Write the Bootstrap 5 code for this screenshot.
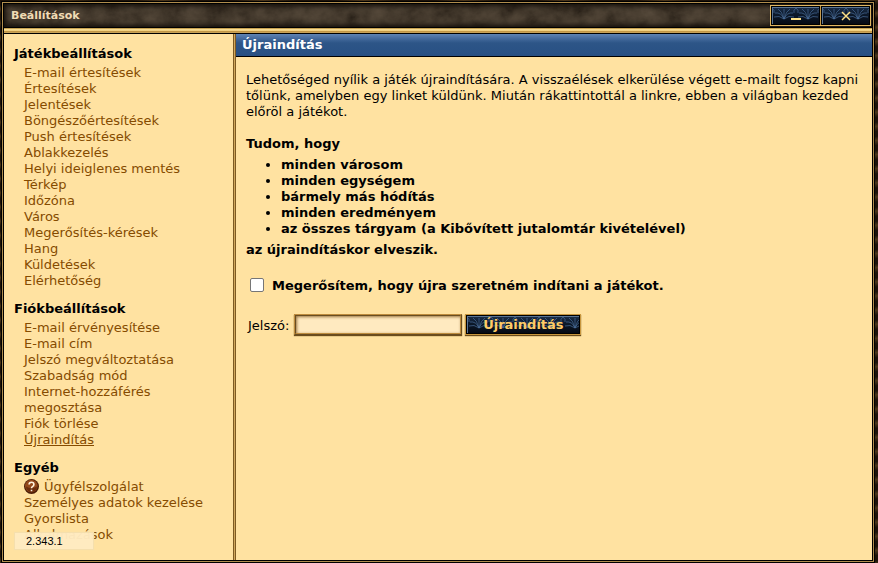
<!DOCTYPE html>
<html lang="hu">
<head>
<meta charset="utf-8">
<meta name="viewport" content="width=device-width, initial-scale=1">
<title>Beállítások</title>
<link rel="stylesheet" href="https://cdn.jsdelivr.net/npm/bootstrap@5.3.0/dist/css/bootstrap.min.css">
<style>
body{font-family:"DejaVu Sans",sans-serif;font-size:13px;line-height:16px;color:#000;background:#30200d}
.frame{padding:2px 4px 1px 2px;background:repeating-linear-gradient(172deg,#1c1208 0 5px,#4a3519 9px,#1c1208 14px)}
.gold-edge{border:1px solid #b08d4d;outline:1px solid #000;background:#000;padding:1px}
.titlebar{height:23px;background:#2b231b}
.titlebar::after{content:"";position:absolute;inset:0;box-shadow:inset 0 0 5px 2px #120d08;pointer-events:none}
.grain{inset:0}
.titlebar h1{font-size:11px;line-height:16px;color:#f0dbb4;padding:0 0 0 7px}
.win-btns{gap:1px;background:#c79c4d;border:1px solid #e0b661;right:1px;top:1px;z-index:1}
.win-btn{width:49px;height:19px;border:1px solid #000;padding:0;background:#07101d;overflow:hidden}
.win-btn svg{display:block;width:100%;height:100%}
.strip{height:7px;background:linear-gradient(#a77a24,#f9df96 25%,#f0ce7c 55%,#a27021 80%,#efd58d);border-top:1px solid #000;border-bottom:1px solid #000}
.pane{background:#ffe2a1}
.side{width:229px;padding:12px 10px 0}
.side h2{font-size:13px;line-height:16px;font-weight:700;margin:0 0 3px}
.side ul{padding-left:10px;margin-bottom:12px}
.side a{color:#854b00;text-decoration:none}
.side a:hover,.side a.current{text-decoration:underline}
.side svg{width:16px;height:16px;margin-right:4px;vertical-align:top}
.divider{width:3px;border:1px solid #7d5a22;border-width:0 1px;background:#d0a75c}
.main-head{height:23px;padding:3px 6px;font-size:13px;line-height:16px;color:#fff;background:linear-gradient(#5f83b3 0,#416799 5px,#2d5587 9px,#285083);border-bottom:1px solid #000}
.content{padding:15px 9px 0 10px}
.facts{padding-left:35px;margin:5px 0}
.confirm{margin-top:18px;gap:8px;padding-left:4px}
.confirm .form-check-input{width:14px;height:14px;margin:0;border:1px solid #767676;border-radius:2px;background-color:#fff}
.confirm .form-check-input:checked{background-color:#0d6efd}
.confirm label{padding-top:2px}
.pass{margin-top:20px;padding-left:2px;gap:3px}
.pass label{padding:2px 2px 0 0}
.pass input{width:168px;height:21px;border:2px ridge #bd8b3d;outline:0;background:#ffeac0;box-shadow:inset 1px 1px 3px #9b7643,0 1px 1px #6b4c1c;font-size:13px;padding:0 4px}
.restart{width:116px;height:21px;border:1px solid #c7963e;padding:1px;background:#000;box-shadow:0 1px 1px #6b4c1c}
.restart svg{inset:1px;width:112px;height:17px}
.restart span{color:#ffcc66;font-weight:700;font-size:13px;line-height:17px}
.version{left:12px;bottom:12px;width:78px;height:16px;padding:1px 11px;font:11px/14px "Liberation Sans",sans-serif;background:rgba(255,235,194,.96);box-shadow:0 0 1px 1px #f5dfad}
</style>
</head>
<body class="vh-100 overflow-hidden">
<svg width="0" height="0" class="position-absolute" aria-hidden="true">
  <defs>
    <filter id="stone" x="0" y="0" width="100%" height="100%"><feTurbulence type="fractalNoise" baseFrequency=".05 .06" numOctaves="6" seed="4"/><feColorMatrix values=".3 0 0 0 .05  .27 0 0 0 .03  .23 0 0 0 .01  0 0 0 0 1" color-interpolation-filters="sRGB"/></filter>
    <linearGradient id="shade" x1="0" y1="0" x2="0" y2="1"><stop offset="0" stop-color="#1c2f4a"/><stop offset=".4" stop-color="#0d1a2c"/><stop offset="1" stop-color="#050a14"/></linearGradient>
    <pattern id="fern" width="24" height="18" patternUnits="userSpaceOnUse"><g fill="none" stroke="#466a96" stroke-width="1" opacity=".7"><path d="M12 12Q9 5 3 6M12 12Q7 8 2 10M12 12Q10 4 6 2M12 12V2M12 12Q15 5 21 6M12 12Q17 8 22 10M12 12Q14 4 18 2M0 1Q3 3 2 6M24 1Q21 3 22 6"/></g></pattern>
  </defs>
</svg>
<div class="frame h-100">
<div class="gold-edge h-100 d-flex flex-column position-relative">
  <header class="titlebar position-relative d-flex align-items-center flex-shrink-0">
    <svg class="grain position-absolute w-100 h-100" aria-hidden="true"><rect width="100%" height="100%" filter="url(#stone)"/></svg>
    <h1 class="m-0 fw-bold position-relative">Beállítások</h1>
    <div class="win-btns position-absolute d-flex">
      <button type="button" class="win-btn" aria-label="Kis méret"><svg viewBox="0 0 47 17"><rect width="47" height="17" fill="url(#shade)"/><rect width="47" height="13" fill="url(#fern)"/><path d="M0 .5H47M.5 0V17" stroke="#5a7493"/><path d="M19 12H29" stroke="#ffe288" stroke-width="2"/></svg></button>
      <button type="button" class="win-btn" aria-label="Bezárás"><svg viewBox="0 0 47 17"><rect width="47" height="17" fill="url(#shade)"/><rect width="47" height="13" fill="url(#fern)"/><path d="M0 .5H47M.5 0V17" stroke="#5a7493"/><path d="M20 5L28 13M28 5L20 13" stroke="#ffe288" stroke-width="1.500"/></svg></button>
    </div>
  </header>
  <div class="strip flex-shrink-0"></div>
  <div class="pane d-flex flex-grow-1 overflow-hidden">
    <nav class="side flex-shrink-0" aria-label="Beállítások">
      <h2>Játékbeállítások</h2>
      <ul class="list-unstyled">
        <li><a href="#">E-mail értesítések</a></li><li><a href="#">Értesítések</a></li><li><a href="#">Jelentések</a></li><li><a href="#">Böngészőértesítések</a></li><li><a href="#">Push értesítések</a></li><li><a href="#">Ablakkezelés</a></li><li><a href="#">Helyi ideiglenes mentés</a></li><li><a href="#">Térkép</a></li><li><a href="#">Időzóna</a></li><li><a href="#">Város</a></li><li><a href="#">Megerősítés-kérések</a></li><li><a href="#">Hang</a></li><li><a href="#">Küldetések</a></li><li><a href="#">Elérhetőség</a></li>
      </ul>
      <h2>Fiókbeállítások</h2>
      <ul class="list-unstyled">
        <li><a href="#">E-mail érvényesítése</a></li><li><a href="#">E-mail cím</a></li><li><a href="#">Jelszó megváltoztatása</a></li><li><a href="#">Szabadság mód</a></li><li><a href="#">Internet-hozzáférés<br>megosztása</a></li><li><a href="#">Fiók törlése</a></li><li><a href="#" class="current" aria-current="page">Újraindítás</a></li>
      </ul>
      <h2>Egyéb</h2>
      <ul class="list-unstyled">
        <li><a href="#"><svg viewBox="0 0 16 16" aria-hidden="true"><circle cx="7.5" cy="7.5" r="7.5" fill="#4c1e08"/><circle cx="7.3" cy="7" r="6.3" fill="#94491b"/><path d="M2 7.5a5.5 5.5 0 0 0 11 0Q7.500 10.500 2 7.500" fill="#6b2d0d"/><path d="M5.100 5.600Q5.100 3.300 7.500 3.300T9.900 5.500Q9.900 6.900 8.400 7.600Q7.500 8.100 7.500 9.300M7.500 10.700V12.300" fill="none" stroke="#fff3df" stroke-width="1.600"/></svg>Ügyfélszolgálat</a></li><li><a href="#">Személyes adatok kezelése</a></li><li><a href="#">Gyorslista</a></li><li><a href="#">Alkalmazások</a></li>
      </ul>
    </nav>
    <div class="divider flex-shrink-0"></div>
    <main class="flex-grow-1">
      <h2 class="main-head m-0 fw-bold">Újraindítás</h2>
      <form class="content">
        <p class="mb-3">Lehetőséged nyílik a játék újraindítására. A visszaélések elkerülése végett e-mailt fogsz kapni tőlünk, amelyben egy linket küldünk. Miután rákattintottál a linkre, ebben a világban kezded előröl a játékot.</p>
        <div class="fw-bold">
          <div>Tudom, hogy</div>
          <ul class="facts"><li>minden városom</li><li>minden egységem</li><li>bármely más hódítás</li><li>minden eredményem</li><li>az összes tárgyam (a Kibővített jutalomtár kivételével)</li></ul>
          <div>az újraindításkor elveszik.</div>
        </div>
        <div class="confirm d-flex align-items-center fw-bold"><input class="form-check-input" type="checkbox" id="confirm"><label for="confirm">Megerősítem, hogy újra szeretném indítani a játékot.</label></div>
        <div class="pass d-flex align-items-center"><label for="password">Jelszó:</label><input type="password" id="password">
          <button type="button" class="restart position-relative"><svg class="position-absolute" viewBox="0 0 112 17" aria-hidden="true"><rect width="112" height="17" fill="url(#shade)"/><rect width="112" height="13" fill="url(#fern)"/><path d="M0 .5H112M.5 0V17" stroke="#5a7493"/></svg><span class="position-relative d-block">Újraindítás</span></button>
        </div>
      </form>
    </main>
  </div>
  <div class="version position-absolute">2.343.1</div>
</div>
</div>
<script src="https://cdn.jsdelivr.net/npm/bootstrap@5.3.0/dist/js/bootstrap.bundle.min.js"></script>
</body>
</html>
